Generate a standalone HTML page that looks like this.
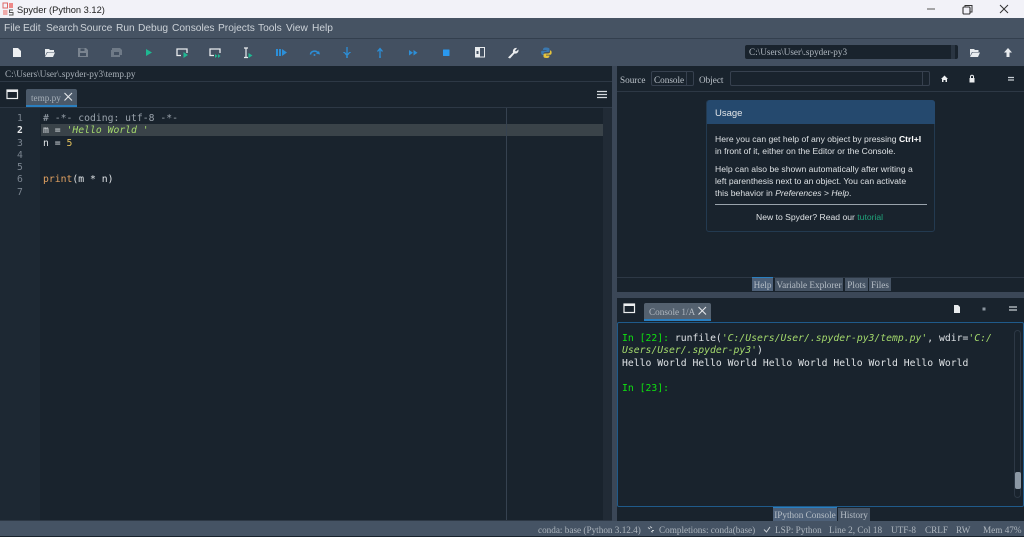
<!DOCTYPE html>
<html><head><meta charset="utf-8"><title>Spyder (Python 3.12)</title>
<style>
html,body{margin:0;padding:0;width:1024px;height:536px;overflow:hidden;background:#19232d}
div,svg{position:absolute}
.t{white-space:nowrap;line-height:14px}
.s{font-family:"Liberation Sans",sans-serif}
.n{font-family:"Liberation Sans",sans-serif;font-size:10.2px;color:#ccd2d8;top:22px;white-space:nowrap;line-height:14px}
.r{font-family:"Liberation Serif",serif;font-size:9.2px;color:#bcc3ca}
.m{font-family:"DejaVu Sans Mono",monospace;font-size:9.75px;color:#dfe3e6;white-space:pre;line-height:12px}
.tab{background:#455364;color:#b6bec6;text-align:center;font-family:"Liberation Serif",serif;font-size:9.2px;line-height:15px;height:13px;top:278px;white-space:nowrap}
</style></head><body>
<!-- title -->
<div style="left:0;top:0;width:1024px;height:18px;background:#f2f2f8"></div>
<svg style="left:2px;top:2px" width="12" height="14" viewBox="0 0 12 14"><rect x="1" y="1" width="4.500" height="5" fill="none" stroke="#d66" stroke-width="1"/><rect x="7" y="1" width="4" height="5" fill="#e88"/><rect x="1" y="8" width="4.500" height="5" fill="#eaa"/><path d="M11 8H7.500V10.500H11V13H7" fill="none" stroke="#555" stroke-width="1"/></svg>
<div class="t s" style="left:17px;top:3px;font-size:9.300px;color:#222">Spyder (Python 3.12)</div>
<svg style="left:920px;top:0" width="104" height="18" viewBox="0 0 104 18"><path d="M7 9H15" stroke="#555" stroke-width="1"/><rect x="43" y="7" width="7" height="7" rx="1" fill="none" stroke="#333" stroke-width="1.100"/><path d="M45 7V5.500H52V12H50" fill="none" stroke="#333"/><path d="M80 5L88 13M88 5L80 13" stroke="#333" stroke-width="1"/></svg>
<!-- menu -->
<div style="left:0;top:18px;width:1024px;height:20px;background:#465363"></div>
<div style="left:0;top:38px;width:1024px;height:1px;background:#333f4e"></div>
<div class="n" style="left:4px">File</div>
<div class="n" style="left:23px">Edit</div>
<div class="n" style="left:46px">Search</div>
<div class="n" style="left:80px">Source</div>
<div class="n" style="left:116px">Run</div>
<div class="n" style="left:138px">Debug</div>
<div class="n" style="left:172px">Consoles</div>
<div class="n" style="left:218px">Projects</div>
<div class="n" style="left:258px">Tools</div>
<div class="n" style="left:286px">View</div>
<div class="n" style="left:312px">Help</div>
<!-- toolbar -->
<div style="left:0;top:39px;width:1024px;height:27px;background:#435061"></div>
<svg style="left:0;top:39px" width="560" height="27" viewBox="0 39 560 27">
<path d="M13 48H18L21 51V57H13Z" fill="#eef0f2"/>
<path d="M45 49H49L50 50H54V52H47L45 56ZM45 57L47.500 52.500H55L53 57Z" fill="#e8ebee"/>
<path d="M78 48H86L88 50V57H78Z" fill="#7a8490"/><rect x="80.500" y="48.500" width="4" height="2.500" fill="#435061"/><rect x="80" y="53" width="6" height="3" fill="#435061"/>
<path d="M112 48H120L122 50V55H120V57H111V50H112Z" fill="#6f7a87"/><rect x="114" y="52" width="5" height="3" fill="#435061"/>
<path d="M146 49L152 52.500L146 56Z" fill="#1fb892"/>
<path d="M181 55.500H177V49H187V53" fill="none" stroke="#e8ebee" stroke-width="1.300"/><path d="M183.500 52V58L188 55Z" fill="#1fb892"/>
<path d="M214 55.500H210V49H220V53" fill="none" stroke="#e8ebee" stroke-width="1.300"/><path d="M215 54V58L217.500 56ZM218 54V58L220.500 56Z" fill="#1fb892"/>
<path d="M244 48H248M244 57.500H248M246 48V57.500" stroke="#e8ebee" stroke-width="1.200" fill="none"/><path d="M248.500 53V58L252.500 55.500Z" fill="#1fb892"/>
<rect x="276" y="49" width="2" height="7" fill="#2c8fd8"/><rect x="279" y="49" width="2" height="7" fill="#2c8fd8"/><path d="M282 49L287 52.500L282 56Z" fill="#2c8fd8"/>
<path d="M310.500 54.500A4 3.500 0 0 1 318 53" fill="none" stroke="#2c8fd8" stroke-width="1.500"/><path d="M316 53.500L320 54.500L319 51Z" fill="#2c8fd8"/><circle cx="314.500" cy="55" r="1" fill="#2c8fd8"/>
<path d="M347 47V55M344.500 52.500L347 55.500L349.500 52.500M344 52V53M350 52V53" stroke="#2c8fd8" stroke-width="1.300" fill="none"/><circle cx="347" cy="57" r="1" fill="#2c8fd8"/>
<path d="M380 56V49M377.500 51.500L380 48.500L382.500 51.500" stroke="#2c8fd8" stroke-width="1.300" fill="none"/><circle cx="380" cy="57" r="1" fill="#2c8fd8"/>
<path d="M409 50V55.500L413 52.700ZM413.500 50V55.500L417.500 52.700Z" fill="#2c8fd8"/>
<rect x="443" y="49.500" width="6.500" height="6.500" rx=".5" fill="#2a98ee"/>
<rect x="475.500" y="47.500" width="9" height="9.500" fill="#435061" stroke="#e8ebee"/><rect x="475" y="47" width="5" height="10.500" fill="#e8ebee"/><rect x="476.500" y="51" width="2" height="3" fill="#435061"/>
<path d="M508 57.500L513 52.500C512.500 50 514 47.500 517 48L515 50.500L516 51.500L518.500 49.500C519 52.500 516.500 54 514.500 53.500L510 58.500Z" fill="#eceef0"/>
<path d="M546 47.500C543.500 47.500 543 48.500 543 50H546.500V50.800H542C540.500 50.800 541 55 542.500 55H543.500V53.500C543.500 52.500 544.500 52 546 52H548.500C549 52 549.500 51.500 549.500 51V49C549.500 48 548 47.500 546 47.500Z" fill="#3a78b0"/>
<path d="M546.500 58C549 58 549.500 57 549.500 55.500H546V54.700H550.500C552 54.700 552 50.500 550.500 50.500H550V52C550 53 549 53.500 547.500 53.500H545C544 53.500 543.500 54 543.500 54.500V56.500C543.500 57.500 544.500 58 546.500 58Z" fill="#e5c33c"/>
</svg>
<div style="left:745px;top:45px;width:213px;height:14px;background:#19232d;border-radius:2px"></div>
<div style="left:951px;top:45px;width:4px;height:14px;background:#2a3542"></div>
<div class="t r" style="left:749px;top:45px;color:#b0b8c0">C:\Users\User\.spyder-py3</div>
<svg style="left:969px;top:45px" width="46" height="15" viewBox="0 0 46 15"><path d="M1 4H5L6 5H9.500V7H3L1 11ZM1 12L3.500 7.500H11L9 12Z" fill="#e8ebee"/><path d="M39 3L43 7.500H40.500V12H37.500V7.500H35Z" fill="#e8ebee"/></svg>
<!-- path row -->
<div style="left:0;top:66px;width:612px;height:15px;background:#19232d"></div>
<div style="left:0;top:81px;width:612px;height:1px;background:#2d3845"></div>
<div class="t r" style="left:5px;top:67px;color:#aab2ba">C:\Users\User\.spyder-py3\temp.py</div>
<!-- editor tabs -->
<svg style="left:6px;top:89px" width="14" height="12" viewBox="0 0 14 12"><rect x="1" y="1" width="10.500" height="8.500" fill="none" stroke="#eceef0" stroke-width="1.200"/><rect x="1" y="1" width="10.500" height="2" fill="#eceef0"/></svg>
<div style="left:26px;top:89px;width:51px;height:16px;background:#4b5969;border-radius:2px 2px 0 0"></div>
<div style="left:26px;top:105px;width:51px;height:2px;background:#2a7fc0"></div>
<div class="t r" style="left:31px;top:91px;color:#a6afb8">temp.py</div>
<svg style="left:63px;top:92px" width="11" height="10" viewBox="0 0 11 10"><path d="M1.500 1L9 8.500M9 1L1.500 8.500" stroke="#e3e6e9" stroke-width="1.100"/></svg>
<svg style="left:596px;top:90px" width="12" height="10" viewBox="0 0 12 10"><path d="M1 1.500H11M1 4.500H11M1 7.500H11" stroke="#d6dade" stroke-width="1.200"/></svg>
<div style="left:0;top:107px;width:612px;height:1px;background:#2d3845"></div>
<!-- editor -->
<div style="left:0;top:108px;width:40px;height:412px;background:#1d2833"></div>
<div style="left:41px;top:108px;width:562px;height:412px;background:#19232d"></div>
<div style="left:603px;top:108px;width:9px;height:412px;background:#212b36"></div>
<div style="left:41px;top:124px;width:562px;height:12px;background:#3a4349"></div>
<div style="left:506px;top:108px;width:1px;height:412px;background:#364250"></div>
<div class="m" style="left:17px;top:113px;color:#7a848f;line-height:12.300px">1
<span style="color:#e6e8ea;font-weight:bold">2</span>
3
4
5
6
7</div>
<div class="m" style="left:43px;top:113px;line-height:12.300px"><span style="color:#9aa3ac"># -*- coding: utf-8 -*-</span>
m = <span style="color:#a4d96c;font-style:italic">'Hello World '</span>
n = <span style="color:#e6c35c">5</span>


<span style="color:#e0a060">print</span>(m * n)</div>
<!-- splitters -->
<div style="left:612px;top:66px;width:5px;height:455px;background:#3b4757"></div>
<!-- help pane -->
<div class="t r" style="left:620px;top:73px">Source</div>
<div style="left:651px;top:71px;width:43px;height:15px;border:1px solid #37414f;border-radius:2px;box-sizing:border-box"></div>
<div style="left:686px;top:72px;width:1px;height:13px;background:#37414f"></div>
<div class="t r" style="left:654px;top:73px">Console</div>
<div class="t r" style="left:699px;top:73px">Object</div>
<div style="left:730px;top:71px;width:200px;height:15px;border:1px solid #37414f;border-radius:2px;box-sizing:border-box"></div>
<div style="left:922px;top:72px;width:1px;height:13px;background:#37414f"></div>
<svg style="left:938px;top:73px" width="80" height="12" viewBox="0 0 80 12"><path d="M6.500 2.500L10 6H9V9H7.500V7H5.500V9H4V6H3Z" fill="#eceef0"/><rect x="31.500" y="5" width="5" height="4.500" fill="#eceef0"/><path d="M32.500 5V3.800A1.500 1.500 0 0 1 35.500 3.800V5" fill="none" stroke="#eceef0"/><path d="M70 4.500H76M70 7H76" stroke="#c8ced4" stroke-width="1.200"/></svg>
<div style="left:617px;top:91px;width:407px;height:1px;background:#2d3845"></div>
<!-- usage card -->
<div style="left:706px;top:100px;width:229px;height:132px;background:#19232d;border:1px solid #233a50;border-radius:3px;box-sizing:border-box"></div>
<div style="left:707px;top:100px;width:228px;height:24px;background:#25496e;border-radius:3px 3px 0 0"></div>
<div class="t s" style="left:715px;top:107px;font-size:9.500px;color:#e3e6e9">Usage</div>
<div class="t s" style="left:715px;top:132px;font-size:8.600px;color:#dde1e4">Here you can get help of any object by pressing <b style="color:#fff">Ctrl+I</b></div>
<div class="t s" style="left:715px;top:144px;font-size:8.600px;color:#dde1e4">in front of it, either on the Editor or the Console.</div>
<div class="t s" style="left:715px;top:162px;font-size:8.600px;color:#dde1e4">Help can also be shown automatically after writing a</div>
<div class="t s" style="left:715px;top:174px;font-size:8.600px;color:#dde1e4">left parenthesis next to an object. You can activate</div>
<div class="t s" style="left:715px;top:186px;font-size:8.600px;color:#dde1e4">this behavior in <i>Preferences &gt; Help</i>.</div>
<div style="left:715px;top:204px;width:212px;height:1px;background:#9aa3ac"></div>
<div class="t s" style="left:756px;top:210px;font-size:8.600px;color:#dde1e4">New to Spyder? Read our <span style="color:#1fa37a">tutorial</span></div>
<!-- help tabs -->
<div style="left:617px;top:277px;width:407px;height:1px;background:#2d3845"></div>
<div class="tab" style="left:752px;width:21px;background:#4d6078">Help</div>
<div style="left:752px;top:277px;width:21px;height:1px;background:#2a7fc0"></div>
<div class="tab" style="left:775px;width:68px">Variable Explorer</div>
<div class="tab" style="left:845px;width:23px">Plots</div>
<div class="tab" style="left:869px;width:22px">Files</div>
<div style="left:617px;top:292px;width:407px;height:6px;background:#3b4757"></div>
<!-- console -->
<svg style="left:623px;top:303px" width="14" height="12" viewBox="0 0 14 12"><rect x="1" y="1" width="10.500" height="8.500" fill="none" stroke="#eceef0" stroke-width="1.200"/><rect x="1" y="1" width="10.500" height="2" fill="#eceef0"/></svg>
<div style="left:644px;top:303px;width:67px;height:16px;background:#54616f;border-radius:2px 2px 0 0"></div>
<div style="left:644px;top:319px;width:67px;height:2px;background:#2a7fc0"></div>
<div class="t r" style="left:649px;top:305px;color:#b0b8c0">Console 1/A</div>
<svg style="left:697px;top:306px" width="11" height="10" viewBox="0 0 11 10"><path d="M1.500 1L9 8.500M9 1L1.500 8.500" stroke="#e3e6e9" stroke-width="1.100"/></svg>
<svg style="left:950px;top:302px" width="70" height="14" viewBox="0 0 70 14"><path d="M4 3H8L10 5V11H4Z" fill="#e8ebee"/><rect x="32.500" y="5.500" width="3" height="3" fill="#8a949e"/><path d="M59 5H67M59 8H67" stroke="#c8ced4" stroke-width="1.200"/></svg>
<div style="left:617px;top:322px;width:407px;height:185px;border:1px solid #1f5a8a;box-sizing:border-box;border-radius:2px"></div>
<div class="m" style="left:622px;top:333px;line-height:12.400px"><span style="color:#10e010">In [22]: </span>runfile(<span style="color:#a4d96c;font-style:italic">'C:/Users/User/.spyder-py3/temp.py'</span>, wdir=<span style="color:#a4d96c;font-style:italic">'C:/</span>
<span style="color:#a4d96c;font-style:italic">Users/User/.spyder-py3'</span>)
Hello World Hello World Hello World Hello World Hello World

<span style="color:#10e010">In [23]: </span></div>
<div style="left:1014px;top:330px;width:7px;height:168px;border:1px solid #2d3845;border-radius:4px;box-sizing:border-box"></div>
<div style="left:1015px;top:472px;width:6px;height:17px;background:#8c98a4;border-radius:2px"></div>
<!-- console tabs -->
<div class="tab" style="left:773px;width:64px;top:508px;background:#4d6078">IPython Console</div>
<div style="left:773px;top:507px;width:64px;height:1px;background:#2a7fc0"></div>
<div class="tab" style="left:838px;width:32px;top:508px">History</div>
<!-- status -->
<div style="left:0;top:521px;width:1024px;height:15px;background:#455364"></div>
<div style="left:0;top:520px;width:612px;height:1px;background:#2d3845"></div>
<div class="t r" style="left:538px;top:523px;color:#aeb6be">conda: base (Python 3.12.4)</div>
<svg style="left:647px;top:525px" width="8" height="8" viewBox="0 0 8 8"><path d="M1 2.500L3 4M3 1.500L5 3M5 5.500H7M4 6.500L6 7" stroke="#c8ced4" stroke-width="1" fill="none"/></svg>
<div class="t r" style="left:659px;top:523px;color:#aeb6be">Completions: conda(base)</div>
<svg style="left:763px;top:526px" width="9" height="7" viewBox="0 0 9 7"><path d="M1 3.500L3.500 6L7 1" fill="none" stroke="#c8ced4"/></svg>
<div class="t r" style="left:775px;top:523px;color:#aeb6be">LSP: Python</div>
<div class="t r" style="left:829px;top:523px;color:#aeb6be">Line 2, Col 18</div>
<div class="t r" style="left:891px;top:523px;color:#aeb6be">UTF-8</div>
<div class="t r" style="left:925px;top:523px;color:#aeb6be">CRLF</div>
<div class="t r" style="left:956px;top:523px;color:#aeb6be">RW</div>
<div class="t r" style="left:983px;top:523px;color:#aeb6be">Mem 47%</div>
</body></html>
